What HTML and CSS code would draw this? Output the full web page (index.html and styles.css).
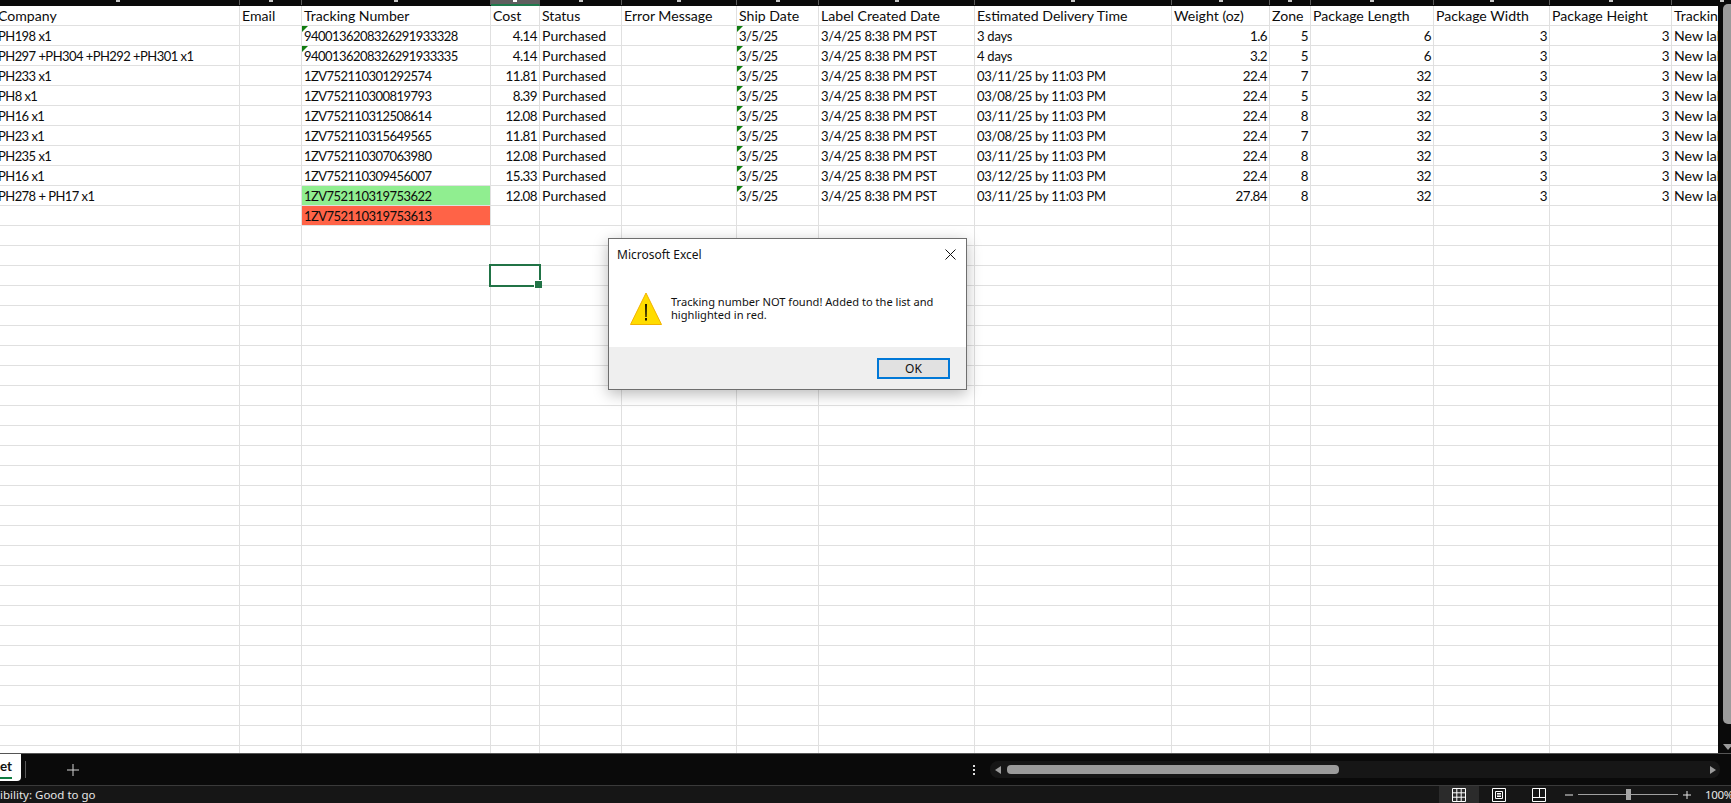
FILE: index.html
```html
<!DOCTYPE html>
<html lang="en">
<head>
    <meta charset="UTF-8">
    <meta name="viewport" content="width=device-width, initial-scale=1.0">
    <title>Microsoft Excel</title>
    <link rel="stylesheet" href="styles.css">
</head>
<body>
    <div class="col-strip">
        <span class="head-cell w1"></span><span class="head-cell w2"></span><span class="head-cell w3"></span>
        <span class="head-cell w4 active"></span><span class="head-cell w5"></span><span class="head-cell w6"></span>
        <span class="head-cell w7"></span><span class="head-cell w8"></span><span class="head-cell w9"></span>
        <span class="head-cell w10"></span><span class="head-cell w11"></span><span class="head-cell w12"></span>
        <span class="head-cell w13"></span><span class="head-cell w14"></span><span class="head-cell w15"></span>
    </div>

    <div class="work-area">
        <div class="sheet">
            <table>
                <colgroup>
                    <col class="w1"><col class="w2"><col class="w3"><col class="w4"><col class="w5">
                    <col class="w6"><col class="w7"><col class="w8"><col class="w9"><col class="w10">
                    <col class="w11"><col class="w12"><col class="w13"><col class="w14"><col class="w15">
                </colgroup>
                <thead>
                    <tr>
                        <th>Company</th><th>Email</th><th>Tracking Number</th><th>Cost</th><th>Status</th>
                        <th>Error Message</th><th>Ship Date</th><th>Label Created Date</th><th>Estimated Delivery Time</th><th>Weight (oz)</th>
                        <th>Zone</th><th>Package Length</th><th>Package Width</th><th>Package Height</th><th>Tracking</th>
                    </tr>
                </thead>
                <tbody>
                    <tr>
                        <td>PH198 x1</td><td></td><td class="flag">9400136208326291933328</td><td class="num">4.14</td><td class="word">Purchased</td>
                        <td></td><td class="flag">3/5/25</td><td class="stamp">3/4/25 8:38 PM PST</td><td class="stamp">3 days</td><td class="num">1.6</td>
                        <td class="num">5</td><td class="num">6</td><td class="num">3</td><td class="num">3</td><td class="word">New label</td>
                    </tr>
                    <tr>
                        <td>PH297 +PH304 +PH292 +PH301 x1</td><td></td><td class="flag">9400136208326291933335</td><td class="num">4.14</td><td class="word">Purchased</td>
                        <td></td><td class="flag">3/5/25</td><td class="stamp">3/4/25 8:38 PM PST</td><td class="stamp">4 days</td><td class="num">3.2</td>
                        <td class="num">5</td><td class="num">6</td><td class="num">3</td><td class="num">3</td><td class="word">New label</td>
                    </tr>
                    <tr>
                        <td>PH233 x1</td><td></td><td>1ZV752110301292574</td><td class="num">11.81</td><td class="word">Purchased</td>
                        <td></td><td class="flag">3/5/25</td><td class="stamp">3/4/25 8:38 PM PST</td><td class="stamp">03/11/25 by 11:03 PM</td><td class="num">22.4</td>
                        <td class="num">7</td><td class="num">32</td><td class="num">3</td><td class="num">3</td><td class="word">New label</td>
                    </tr>
                    <tr>
                        <td>PH8 x1</td><td></td><td>1ZV752110300819793</td><td class="num">8.39</td><td class="word">Purchased</td>
                        <td></td><td class="flag">3/5/25</td><td class="stamp">3/4/25 8:38 PM PST</td><td class="stamp">03/08/25 by 11:03 PM</td><td class="num">22.4</td>
                        <td class="num">5</td><td class="num">32</td><td class="num">3</td><td class="num">3</td><td class="word">New label</td>
                    </tr>
                    <tr>
                        <td>PH16 x1</td><td></td><td>1ZV752110312508614</td><td class="num">12.08</td><td class="word">Purchased</td>
                        <td></td><td class="flag">3/5/25</td><td class="stamp">3/4/25 8:38 PM PST</td><td class="stamp">03/11/25 by 11:03 PM</td><td class="num">22.4</td>
                        <td class="num">8</td><td class="num">32</td><td class="num">3</td><td class="num">3</td><td class="word">New label</td>
                    </tr>
                    <tr>
                        <td>PH23 x1</td><td></td><td>1ZV752110315649565</td><td class="num">11.81</td><td class="word">Purchased</td>
                        <td></td><td class="flag">3/5/25</td><td class="stamp">3/4/25 8:38 PM PST</td><td class="stamp">03/08/25 by 11:03 PM</td><td class="num">22.4</td>
                        <td class="num">7</td><td class="num">32</td><td class="num">3</td><td class="num">3</td><td class="word">New label</td>
                    </tr>
                    <tr>
                        <td>PH235 x1</td><td></td><td>1ZV752110307063980</td><td class="num">12.08</td><td class="word">Purchased</td>
                        <td></td><td class="flag">3/5/25</td><td class="stamp">3/4/25 8:38 PM PST</td><td class="stamp">03/11/25 by 11:03 PM</td><td class="num">22.4</td>
                        <td class="num">8</td><td class="num">32</td><td class="num">3</td><td class="num">3</td><td class="word">New label</td>
                    </tr>
                    <tr>
                        <td>PH16 x1</td><td></td><td>1ZV752110309456007</td><td class="num">15.33</td><td class="word">Purchased</td>
                        <td></td><td class="flag">3/5/25</td><td class="stamp">3/4/25 8:38 PM PST</td><td class="stamp">03/12/25 by 11:03 PM</td><td class="num">22.4</td>
                        <td class="num">8</td><td class="num">32</td><td class="num">3</td><td class="num">3</td><td class="word">New label</td>
                    </tr>
                    <tr>
                        <td>PH278 + PH17 x1</td><td></td><td class="found">1ZV752110319753622</td><td class="num">12.08</td><td class="word">Purchased</td>
                        <td></td><td class="flag">3/5/25</td><td class="stamp">3/4/25 8:38 PM PST</td><td class="stamp">03/11/25 by 11:03 PM</td><td class="num">27.84</td>
                        <td class="num">8</td><td class="num">32</td><td class="num">3</td><td class="num">3</td><td class="word">New label</td>
                    </tr>
                    <tr>
                        <td></td><td></td><td class="missing">1ZV752110319753613</td><td></td><td></td>
                        <td></td><td></td><td></td><td></td><td></td>
                        <td></td><td></td><td></td><td></td><td></td>
                    </tr>
                    <!-- rest of the empty grid, lines come from the gradient -->
                    <tr class="blank">
                        <td></td><td></td><td></td><td></td><td></td>
                        <td></td><td></td><td></td><td></td><td></td>
                        <td></td><td></td><td></td><td></td><td></td>
                    </tr>
                </tbody>
            </table>
            <div class="selected-cell"></div>
        </div>
        <div class="v-scroll">
            <div class="v-thumb"></div>
            <span class="arrow-down"></span>
        </div>
    </div>

    <div class="tab-bar">
        <div class="tab"><span class="tab-name">et</span></div>
        <span class="tab-sep"></span>
        <svg class="add-sheet" width="12" height="12" viewBox="0 0 12 12"><path d="M6 0v12M0 6h12" stroke="#d4d4d4" stroke-width="1" fill="none"/></svg>
        <div class="tab-dots"><i></i><i></i><i></i></div>
        <div class="h-scroll">
            <span class="arrow-left"></span>
            <div class="h-thumb"></div>
            <span class="arrow-right"></span>
        </div>
    </div>

    <div class="status-bar">
        <span class="status-text">ibility: Good to go</span>
        <div class="status-right">
            <span class="view-btn on">
                <svg width="14" height="14" viewBox="0 0 14 14"><path d="M.5.5h13v13H.5zM.5 4.8h13M.5 9.2h13M4.8.5v13M9.2.5v13" stroke="#fff" fill="none"/></svg>
            </span>
            <span class="view-btn">
                <svg width="14" height="14" viewBox="0 0 14 14"><path d="M.5.5h13v13H.5zM3.5 3.5h7v7h-7zM5 5.500h4M5 7h4M5 8.500h4" stroke="#fff" fill="none"/></svg>
            </span>
            <span class="view-btn">
                <svg width="14" height="14" viewBox="0 0 14 14"><path d="M.5.5h13v13H.5zM.5 9.500h13M7.500.5v9" stroke="#fff" fill="none"/></svg>
            </span>
            <div class="zoom">
                <span class="zoom-sign">
                    <svg width="8" height="8" viewBox="0 0 8 8"><path d="M0 4h8" stroke="#e6e6e6" fill="none"/></svg>
                </span>
                <div class="zoom-track"><div class="zoom-knob"></div></div>
                <span class="zoom-sign">
                    <svg width="8" height="8" viewBox="0 0 8 8"><path d="M0 4h8M4 0v8" stroke="#e6e6e6" fill="none"/></svg>
                </span>
            </div>
            <span class="zoom-pct">100%</span>
        </div>
    </div>

    <div class="dialog">
        <div class="dialog-title">
            <span>Microsoft Excel</span>
            <svg width="11" height="11" viewBox="0 0 11 11"><path d="M.5.5l10 10M10.500.5l-10 10" stroke="#111" stroke-width="1" fill="none"/></svg>
        </div>
        <div class="dialog-body">
            <svg class="warn-icon" width="32" height="33" viewBox="0 0 32 33">
                <path d="M16 1L31.500 32.500H.5z" fill="#ffdc00" stroke="#f2b200" stroke-width="1"/>
                <path d="M15.100 12h1.800l-.3 13h-1.200z" fill="#000"/>
                <rect x="15.100" y="26" width="1.800" height="2.500" fill="#000"/>
            </svg>
            <p>Tracking number NOT found! Added to the list and highlighted in red.</p>
        </div>
        <div class="dialog-foot">
            <button class="ok-btn">OK</button>
        </div>
    </div>
</body>
</html>
```

FILE: styles.css
```css
* {
    box-sizing: border-box;
}
html, body {
    height: 100%;
}
body {
    margin: 0;
    height: 803px;
    display: flex;
    flex-direction: column;
    overflow: hidden;
    position: relative;
    background-color: #0a0a0a;
    font-family: "Lato", "Liberation Sans", sans-serif;
}

/* column widths */
.w1 { width: 244px; }
.w2 { width: 62px; }
.w3 { width: 189px; }
.w4 { width: 49px; }
.w5 { width: 82px; }
.w6 { width: 115px; }
.w7 { width: 82px; }
.w8 { width: 156px; }
.w9 { width: 197px; }
.w10 { width: 98px; }
.w11 { width: 41px; }
.w12 { width: 123px; }
.w13 { width: 116px; }
.w14 { width: 122px; }
.w15 { width: 100px; }

/* leftover of the column letters at the top */
.col-strip {
    height: 6px;
    flex: none;
    display: flex;
    margin-left: -4px;
    background-color: #0a0a0a;
}
.head-cell {
    flex: none;
    height: 5px;
    display: flex;
    justify-content: center;
    border-right: 1px solid #5a5a5a;
}
.head-cell::after {
    content: "";
    width: 4px;
    height: 2px;
    background-color: #c8c8c8;
}
.head-cell.active {
    height: 6px;
    background-color: #5f5f5f;
    border-bottom: 2px solid #1f7a4d;
}
.head-cell.active::after {
    background-color: #fff;
}

.work-area {
    flex: 1;
    display: flex;
    min-height: 0;
}
.sheet {
    flex: 1;
    position: relative;
    overflow: hidden;
    background-color: #fff;
}
table {
    width: 1776px;
    margin-left: -4px;
    table-layout: fixed;
    border-collapse: separate;
    border-spacing: 0;
    color: #0c0c0c;
    font-size: 13px;
    letter-spacing: -0.55px;
}
th, td {
    height: 20px;
    padding: 1px 2px 0;
    border-right: 1px solid #e0e0e0;
    border-bottom: 1px solid #e0e0e0;
    font-weight: normal;
    text-align: left;
    white-space: nowrap;
    overflow: hidden;
    line-height: 18px;
}
th, .word {
    font-size: 14.1px;
    letter-spacing: 0;
}
.stamp {
    letter-spacing: -0.25px;
}
.num {
    text-align: right;
    font-size: 13.4px;
}
.flag {
    position: relative;
}
.flag::before {
    content: "";
    position: absolute;
    left: 0;
    top: 0;
    border-top: 6px solid #107c10;
    border-right: 6px solid transparent;
}
.found {
    background-color: #90ee90;
}
.missing {
    background-color: #ff6347;
}
.blank td {
    height: 540px;
    padding: 0;
    background-image: repeating-linear-gradient(to bottom, transparent 0, transparent 19px, #e0e0e0 19px, #e0e0e0 20px);
    border-bottom: none;
}
.selected-cell {
    position: absolute;
    left: 489px;
    top: 258px;
    width: 52px;
    height: 23px;
    border: 2px solid #217346;
}
.selected-cell::after {
    content: "";
    position: absolute;
    right: -3px;
    bottom: -3px;
    width: 7px;
    height: 7px;
    background-color: #217346;
    border-top: 1px solid #fff;
    border-left: 1px solid #fff;
}

.v-scroll {
    width: 13px;
    flex: none;
    position: relative;
    padding-left: 1px;
    background-color: #0a0a0a;
}
.v-thumb {
    height: 720px;
    margin: -2px 0 0 4px;
    border-radius: 5px 0 0 5px;
    background-color: #9b9b9b;
}
.arrow-down {
    position: absolute;
    left: 5px;
    bottom: 3px;
    border-top: 6px solid #9b9b9b;
    border-left: 5px solid transparent;
    border-right: 5px solid transparent;
}

.tab-bar {
    height: 32px;
    flex: none;
    display: flex;
    align-items: center;
    background-color: #0a0a0a;
    border-top: 1px solid #555;
}
.tab {
    width: 21px;
    height: 27px;
    align-self: flex-start;
    background-color: #fff;
    border-bottom-right-radius: 4px;
    color: #111;
    font-size: 13.4px;
    font-weight: bold;
    text-align: right;
    padding-right: 9px;
    line-height: 25px;
    position: relative;
}
.tab::after {
    content: "";
    position: absolute;
    left: 0;
    right: 9px;
    bottom: 2px;
    height: 2px;
    background-color: #107c41;
}
.tab-sep {
    width: 1px;
    height: 17px;
    margin-left: 4px;
    background-color: #5a5a5a;
}
.add-sheet {
    margin-left: 41px;
}
.tab-dots {
    margin-left: 894px;
    display: flex;
    flex-direction: column;
    gap: 2px;
}
.tab-dots i {
    width: 2px;
    height: 2px;
    background-color: #ddd;
}
.h-scroll {
    margin-left: 15px;
    margin-right: 11px;
    flex: 1;
    height: 17px;
    border-radius: 8px;
    background-color: #161616;
    display: flex;
    align-items: center;
    padding: 0 4px 0 5px;
}
.h-thumb {
    width: 332px;
    height: 9px;
    margin-left: 6px;
    border-radius: 4px;
    background-color: #9b9b9b;
}
.arrow-left {
    border-right: 6px solid #9b9b9b;
    border-top: 4px solid transparent;
    border-bottom: 4px solid transparent;
}
.arrow-right {
    margin-left: auto;
    border-left: 6px solid #9b9b9b;
    border-top: 4px solid transparent;
    border-bottom: 4px solid transparent;
}

.status-bar {
    height: 18px;
    flex: none;
    display: flex;
    align-items: center;
    justify-content: space-between;
    background-color: #161616;
    border-top: 1px solid #3a3a3a;
    color: #e6e6e6;
    font-size: 11.5px;
    font-family: "Noto Sans", sans-serif;
}
.status-right {
    display: flex;
    align-items: center;
    height: 100%;
}
.view-btn {
    width: 40px;
    height: 100%;
    display: flex;
    align-items: center;
    justify-content: center;
}
.view-btn.on {
    background-color: #2b2b2b;
}
.zoom {
    margin-left: 6px;
    display: flex;
    align-items: center;
    gap: 5px;
}
.zoom-sign {
    display: flex;
}
.zoom-track {
    width: 100px;
    height: 1px;
    background-color: #a0a0a0;
    position: relative;
}
.zoom-knob {
    position: absolute;
    left: 48px;
    top: -5px;
    width: 5px;
    height: 11px;
    background-color: #a6a6a6;
}
.zoom-pct {
    margin-left: 14px;
    white-space: nowrap;
    width: 26px;
    letter-spacing: -0.3px;
}

.dialog {
    position: absolute;
    left: 608px;
    top: 238px;
    width: 359px;
    height: 152px;
    display: flex;
    flex-direction: column;
    background-color: #fff;
    border: 1px solid #6e6e6e;
    box-shadow: 0 4px 14px rgba(0, 0, 0, 0.28);
    font-family: "Noto Sans", sans-serif;
    font-size: 11.1px;
    color: #111;
}
.dialog-title {
    height: 30px;
    flex: none;
    display: flex;
    align-items: center;
    justify-content: space-between;
    padding: 0 10px 0 8px;
    font-size: 12px;
}
.dialog-body {
    flex: 1;
    display: flex;
    align-items: flex-start;
    padding: 23px 20px 0 21px;
}
.warn-icon {
    flex: none;
}
.dialog-body p {
    margin: 0 0 0 9px;
    line-height: 13px;
    padding-top: 3px;
}
.dialog-foot {
    height: 42px;
    flex: none;
    display: flex;
    align-items: flex-start;
    justify-content: flex-end;
    padding: 11px 16px 0 0;
    background-color: #efefef;
}
.ok-btn {
    width: 73px;
    height: 21px;
    padding: 0;
    border: 2px solid #0078d7;
    background-color: #e1e1e1;
    font-family: inherit;
    font-size: 12px;
    color: #111;
}
```
